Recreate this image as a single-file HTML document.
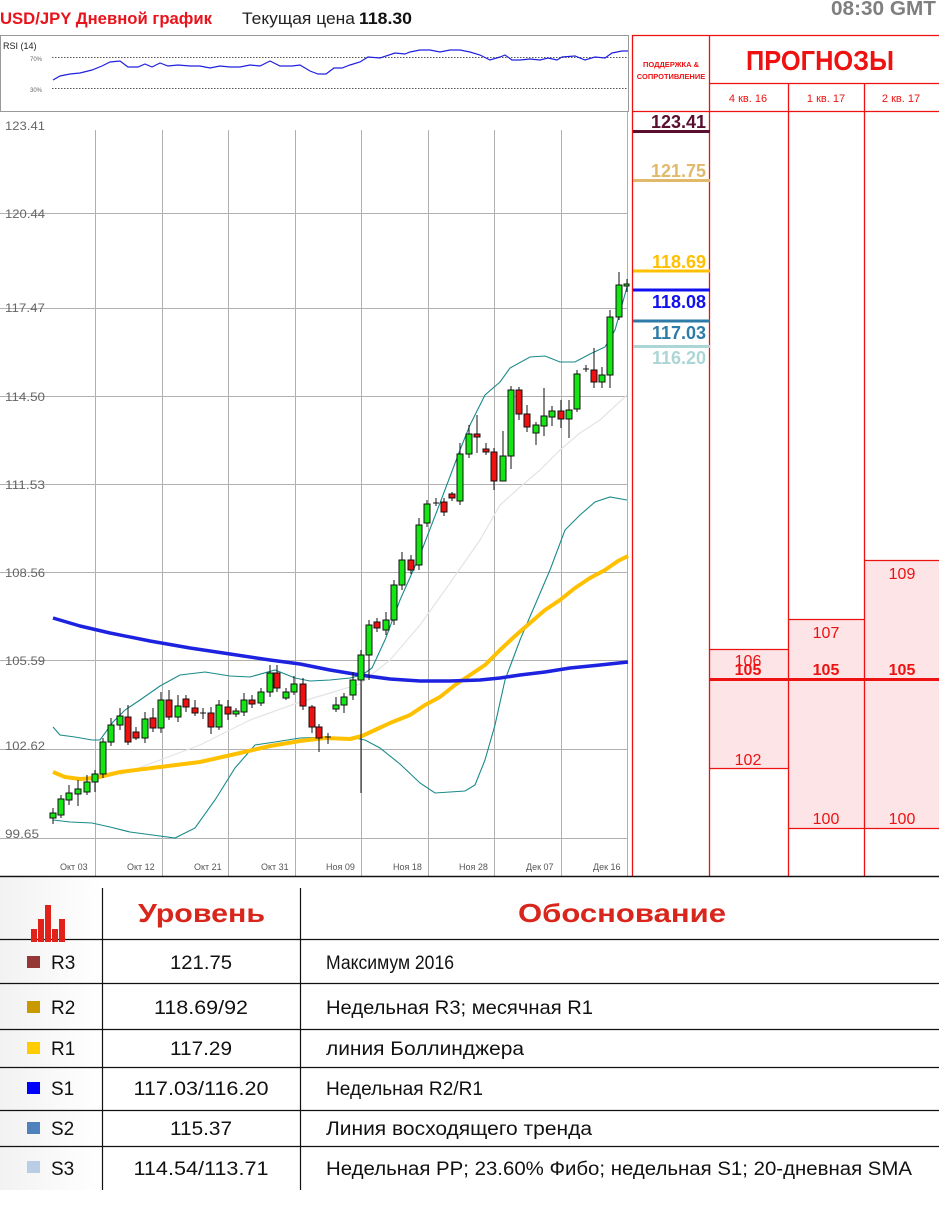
<!DOCTYPE html>
<html><head><meta charset="utf-8"><style>
html,body{margin:0;padding:0;background:#fff;width:939px;height:1209px;overflow:hidden}
svg{display:block}
text{font-family:"Liberation Sans","DejaVu Sans",sans-serif}
</style></head><body>
<svg width="939" height="1209" viewBox="0 0 939 1209" xmlns="http://www.w3.org/2000/svg">
<defs>
<linearGradient id="lg" x1="0" x2="1" y1="0" y2="0"><stop offset="0" stop-color="#f2f2f2"/><stop offset="1" stop-color="#fff"/></linearGradient>
</defs>
<text x="0" y="24" font-size="17" font-weight="bold" fill="#e8141c" textLength="212" lengthAdjust="spacingAndGlyphs">USD/JPY Дневной график</text>
<text x="242" y="24" font-size="17" fill="#222" textLength="113" lengthAdjust="spacingAndGlyphs">Текущая цена</text>
<text x="359" y="24" font-size="17" font-weight="bold" fill="#111" textLength="53" lengthAdjust="spacingAndGlyphs">118.30</text>
<text x="831" y="15" font-size="20" font-weight="bold" fill="#7f7f7f" textLength="105" lengthAdjust="spacingAndGlyphs">08:30 GMT</text>

<rect x="0.5" y="35.5" width="628" height="76" fill="#fff" stroke="#999"/>
<text x="3" y="49" font-size="9" fill="#222">RSI (14)</text>
<text x="30" y="61" font-size="6" fill="#666">70%</text>
<text x="30" y="92" font-size="6" fill="#666">30%</text>
<line x1="52" y1="57.5" x2="628" y2="57.5" stroke="#555" stroke-dasharray="1.5,1.5"/>
<line x1="52" y1="88.5" x2="628" y2="88.5" stroke="#555" stroke-dasharray="1.5,1.5"/>
<polyline fill="none" stroke="#2020e0" stroke-width="1.2" points="53,80 60,76 70,74 80,73 92,70 102,66 110,62 120,61 128,67 138,67 145,64 152,67 160,63 168,66 178,65 190,66 200,66 210,68 220,66 230,67 240,67 250,65 260,66 270,61 280,66 292,66 300,65 310,71 318,74 326,74 334,68 342,68 350,65 360,62 368,57 380,58 395,53 405,54 410,52 420,50 430,50 440,52 450,50 460,50 470,52 480,55 490,60 500,57 505,55 512,60 520,60 530,59 540,60 548,58 557,60 562,57 575,56 585,60 595,57 605,58 612,53 622,51 628,51"/>

<g stroke="#b0b0b0" stroke-width="1">
<line x1="0" y1="213.5" x2="628" y2="213.5"/>
<line x1="0" y1="308.5" x2="628" y2="308.5"/>
<line x1="0" y1="396.5" x2="628" y2="396.5"/>
<line x1="0" y1="484.5" x2="628" y2="484.5"/>
<line x1="0" y1="572.5" x2="628" y2="572.5"/>
<line x1="0" y1="660.5" x2="628" y2="660.5"/>
<line x1="0" y1="749.5" x2="628" y2="749.5"/>
<line x1="0" y1="838.5" x2="628" y2="838.5"/>
<line x1="95.5" y1="130" x2="95.5" y2="876"/>
<line x1="162.5" y1="130" x2="162.5" y2="876"/>
<line x1="228.5" y1="130" x2="228.5" y2="876"/>
<line x1="295.5" y1="130" x2="295.5" y2="876"/>
<line x1="361.5" y1="130" x2="361.5" y2="876"/>
<line x1="428.5" y1="130" x2="428.5" y2="876"/>
<line x1="494.5" y1="130" x2="494.5" y2="876"/>
<line x1="561.5" y1="130" x2="561.5" y2="876"/>
<line x1="627.5" y1="112" x2="627.5" y2="876"/>
</g>
<g font-size="12" fill="#666">
<text x="5" y="130" textLength="40" lengthAdjust="spacingAndGlyphs">123.41</text>
<text x="5" y="218" textLength="40" lengthAdjust="spacingAndGlyphs">120.44</text>
<text x="5" y="312" textLength="40" lengthAdjust="spacingAndGlyphs">117.47</text>
<text x="5" y="401" textLength="40" lengthAdjust="spacingAndGlyphs">114.50</text>
<text x="5" y="489" textLength="40" lengthAdjust="spacingAndGlyphs">111.53</text>
<text x="5" y="577" textLength="40" lengthAdjust="spacingAndGlyphs">108.56</text>
<text x="5" y="665" textLength="40" lengthAdjust="spacingAndGlyphs">105.59</text>
<text x="5" y="750" textLength="40" lengthAdjust="spacingAndGlyphs">102.62</text>
<text x="5" y="838" textLength="34" lengthAdjust="spacingAndGlyphs">99.65</text>
</g>
<g font-size="9" fill="#555">
<text x="60" y="870">Окт 03</text>
<text x="127" y="870">Окт 12</text>
<text x="194" y="870">Окт 21</text>
<text x="261" y="870">Окт 31</text>
<text x="326" y="870">Ноя 09</text>
<text x="393" y="870">Ноя 18</text>
<text x="459" y="870">Ноя 28</text>
<text x="526" y="870">Дек 07</text>
<text x="593" y="870">Дек 16</text>
</g>

<polyline fill="none" stroke="#e4e4e4" stroke-width="1.2" points="120,775 160,760 200,745 250,720 300,702 340,690 360,684 390,660 420,625 450,583 480,540 500,505 520,487 540,470 560,450 580,433 600,420 627,395"/>
<polyline fill="none" stroke="#1a8a8a" stroke-width="1.1" points="53,727 60,735 75,737 92,740 100,740 113,722 125,710 140,700 160,686 180,675 205,672 230,676 250,677 275,670 295,678 310,681 330,680 350,678 362,675 372,668 385,640 400,600 420,555 440,503 460,450 470,425 485,395 500,382 510,368 530,357 545,356 560,362 575,362 590,354 605,347 615,330 627,287"/>
<polyline fill="none" stroke="#1a8a8a" stroke-width="1.1" points="53,820 70,822 92,823 110,827 130,832 160,836 175,838 195,828 215,800 235,768 255,745 275,742 300,738 330,737 355,738 365,740 380,748 400,764 420,783 435,793 450,792 465,791 475,785 485,760 495,725 505,680 520,640 535,605 550,570 565,530 580,515 595,502 610,497 627,500"/>
<polyline fill="none" stroke="#ffc000" stroke-width="4" stroke-linejoin="round" points="53,772 65,777 80,779 95,778 120,772 160,767 200,762 240,753 270,746 300,741 325,738 350,739 362,736 375,730 390,723 410,715 425,705 440,697 455,685 470,675 485,665 500,650 515,636 530,623 545,610 560,600 575,588 590,578 605,570 618,561 628,556"/>
<polyline fill="none" stroke="#1c22e0" stroke-width="3.5" stroke-linejoin="round" points="53,618 80,626 110,633 150,641 190,648 230,654 270,660 300,664 330,670 360,675 390,679 420,681 450,681 480,680 500,678 520,675 545,672 570,668 600,665 628,662"/>

<g stroke="#111" stroke-width="1">
<g fill="#14e614">
<line x1="53" y1="808" x2="53" y2="824"/><rect x="50" y="813" width="6" height="5"/>
<line x1="61" y1="795" x2="61" y2="818"/><rect x="58" y="799" width="6" height="16"/>
<line x1="69" y1="785" x2="69" y2="805"/><rect x="66" y="793" width="6" height="7"/>
<line x1="78" y1="780" x2="78" y2="806"/><rect x="75" y="789" width="6" height="5"/>
<line x1="87" y1="775" x2="87" y2="795"/><rect x="84" y="782" width="6" height="10"/>
<line x1="95" y1="770" x2="95" y2="792"/><rect x="92" y="774" width="6" height="8"/>
<line x1="103" y1="738" x2="103" y2="778"/><rect x="100" y="742" width="6" height="32"/>
<line x1="111" y1="718" x2="111" y2="746"/><rect x="108" y="725" width="6" height="17"/>
<line x1="120" y1="708" x2="120" y2="730"/><rect x="117" y="716" width="6" height="9"/>
<line x1="145" y1="712" x2="145" y2="743"/><rect x="142" y="719" width="6" height="19"/>
<line x1="161" y1="692" x2="161" y2="733"/><rect x="158" y="700" width="6" height="28"/>
<line x1="178" y1="695" x2="178" y2="722"/><rect x="175" y="706" width="6" height="11"/>
<line x1="219" y1="700" x2="219" y2="730"/><rect x="216" y="705" width="6" height="22"/>
<line x1="236" y1="708" x2="236" y2="717"/><rect x="233" y="711" width="6" height="3"/>
<line x1="244" y1="693" x2="244" y2="716"/><rect x="241" y="700" width="6" height="12"/>
<line x1="261" y1="688" x2="261" y2="706"/><rect x="258" y="692" width="6" height="11"/>
<line x1="270" y1="665" x2="270" y2="697"/><rect x="267" y="673" width="6" height="19"/>
<line x1="286" y1="688" x2="286" y2="700"/><rect x="283" y="692" width="6" height="6"/>
<line x1="294" y1="676" x2="294" y2="695"/><rect x="291" y="684" width="6" height="8"/>
<line x1="336" y1="697" x2="336" y2="712"/><rect x="333" y="705" width="6" height="4"/>
<line x1="344" y1="693" x2="344" y2="713"/><rect x="341" y="697" width="6" height="8"/>
<line x1="353" y1="672" x2="353" y2="700"/><rect x="350" y="680" width="6" height="15"/>
<line x1="361" y1="650" x2="361" y2="793"/><rect x="358" y="655" width="6" height="25"/>
<line x1="369" y1="620" x2="369" y2="680"/><rect x="366" y="625" width="6" height="30"/>
<line x1="386" y1="612" x2="386" y2="635"/><rect x="383" y="620" width="6" height="10"/>
<line x1="394" y1="580" x2="394" y2="625"/><rect x="391" y="585" width="6" height="35"/>
<line x1="402" y1="552" x2="402" y2="590"/><rect x="399" y="560" width="6" height="25"/>
<line x1="419" y1="518" x2="419" y2="570"/><rect x="416" y="525" width="6" height="40"/>
<line x1="427" y1="500" x2="427" y2="527"/><rect x="424" y="504" width="6" height="19"/>
<line x1="460" y1="443" x2="460" y2="505"/><rect x="457" y="454" width="6" height="47"/>
<line x1="469" y1="425" x2="469" y2="458"/><rect x="466" y="434" width="6" height="20"/>
<line x1="503" y1="431" x2="503" y2="470"/><rect x="500" y="456" width="6" height="25"/>
<line x1="511" y1="386" x2="511" y2="469"/><rect x="508" y="390" width="6" height="66"/>
<line x1="536" y1="422" x2="536" y2="445"/><rect x="533" y="425" width="6" height="8"/>
<line x1="544" y1="388" x2="544" y2="436"/><rect x="541" y="416" width="6" height="10"/>
<line x1="552" y1="406" x2="552" y2="426"/><rect x="549" y="411" width="6" height="6"/>
<line x1="569" y1="400" x2="569" y2="438"/><rect x="566" y="410" width="6" height="9"/>
<line x1="577" y1="370" x2="577" y2="412"/><rect x="574" y="374" width="6" height="35"/>
<line x1="602" y1="367" x2="602" y2="388"/><rect x="599" y="375" width="6" height="7"/>
<line x1="610" y1="310" x2="610" y2="388"/><rect x="607" y="317" width="6" height="58"/>
<line x1="619" y1="272" x2="619" y2="320"/><rect x="616" y="285" width="6" height="32"/>
<line x1="627" y1="279" x2="627" y2="292"/><rect x="624" y="284" width="5" height="2"/>
</g>
<g fill="#f01010">
<line x1="128" y1="705" x2="128" y2="745"/><rect x="125" y="717" width="6" height="25"/>
<line x1="136" y1="727" x2="136" y2="740"/><rect x="133" y="732" width="6" height="6"/>
<line x1="153" y1="708" x2="153" y2="732"/><rect x="150" y="718" width="6" height="10"/>
<line x1="169" y1="690" x2="169" y2="720"/><rect x="166" y="700" width="6" height="17"/>
<line x1="186" y1="695" x2="186" y2="712"/><rect x="183" y="699" width="6" height="8"/>
<line x1="195" y1="700" x2="195" y2="716"/><rect x="192" y="708" width="6" height="5"/>
<line x1="211" y1="707" x2="211" y2="734"/><rect x="208" y="713" width="6" height="14"/>
<line x1="228" y1="700" x2="228" y2="720"/><rect x="225" y="707" width="6" height="7"/>
<line x1="252" y1="695" x2="252" y2="708"/><rect x="249" y="700" width="6" height="4"/>
<line x1="277" y1="665" x2="277" y2="692"/><rect x="274" y="673" width="6" height="15"/>
<line x1="303" y1="678" x2="303" y2="710"/><rect x="300" y="684" width="6" height="22"/>
<line x1="312" y1="705" x2="312" y2="733"/><rect x="309" y="707" width="6" height="20"/>
<line x1="319" y1="724" x2="319" y2="752"/><rect x="316" y="727" width="6" height="11"/>
<line x1="377" y1="618" x2="377" y2="632"/><rect x="374" y="622" width="6" height="6"/>
<line x1="411" y1="555" x2="411" y2="574"/><rect x="408" y="560" width="6" height="10"/>
<line x1="444" y1="498" x2="444" y2="516"/><rect x="441" y="502" width="6" height="10"/>
<line x1="452" y1="492" x2="452" y2="501"/><rect x="449" y="494" width="6" height="4"/>
<line x1="477" y1="415" x2="477" y2="453"/><rect x="474" y="434" width="6" height="3"/>
<line x1="486" y1="443" x2="486" y2="455"/><rect x="483" y="449" width="6" height="3"/>
<line x1="494" y1="448" x2="494" y2="490"/><rect x="491" y="452" width="6" height="29"/>
<line x1="519" y1="387" x2="519" y2="420"/><rect x="516" y="390" width="6" height="24"/>
<line x1="527" y1="405" x2="527" y2="432"/><rect x="524" y="414" width="6" height="13"/>
<line x1="561" y1="400" x2="561" y2="428"/><rect x="558" y="411" width="6" height="8"/>
<line x1="594" y1="348" x2="594" y2="388"/><rect x="591" y="370" width="6" height="12"/>
</g>
<line x1="200" y1="713" x2="206" y2="713"/><line x1="203" y1="708" x2="203" y2="719"/>
<line x1="325" y1="737" x2="331" y2="737"/><line x1="328" y1="733" x2="328" y2="744"/>
<line x1="433" y1="503" x2="439" y2="503"/><line x1="436" y1="498" x2="436" y2="506"/>
<line x1="583" y1="369" x2="589" y2="369"/><line x1="586" y1="365" x2="586" y2="372"/>
</g>

<rect x="709" y="649" width="79" height="119" fill="#fde4e6"/>
<rect x="788" y="619" width="76" height="209" fill="#fde4e6"/>
<rect x="864" y="560" width="75" height="268" fill="#fde4e6"/>
<g stroke="#ee1111" stroke-width="1.3" fill="none">
<line x1="632.5" y1="35" x2="632.5" y2="876"/>
<line x1="632" y1="35.5" x2="939" y2="35.5"/>
<line x1="632" y1="111.5" x2="939" y2="111.5"/>
<line x1="709" y1="83.5" x2="939" y2="83.5"/>
<line x1="709.5" y1="35" x2="709.5" y2="876"/>
<line x1="788.5" y1="83" x2="788.5" y2="876"/>
<line x1="864.5" y1="83" x2="864.5" y2="876"/>
<line x1="709" y1="649.5" x2="788" y2="649.5"/>
<line x1="709" y1="768.5" x2="788" y2="768.5"/>
<line x1="788" y1="619.5" x2="864" y2="619.5"/>
<line x1="788" y1="828.5" x2="939" y2="828.5"/>
<line x1="864" y1="560.5" x2="939" y2="560.5"/>
</g>
<line x1="709" y1="679.5" x2="939" y2="679.5" stroke="#ee1111" stroke-width="3"/>
<g fill="#ee1111" text-anchor="middle">
<text x="671" y="67" font-size="7.5" font-weight="bold">ПОДДЕРЖКА &amp;</text>
<text x="671" y="79" font-size="7.5" font-weight="bold">СОПРОТИВЛЕНИЕ</text>
<text x="820" y="70" font-size="28" font-weight="bold" textLength="148" lengthAdjust="spacingAndGlyphs">ПРОГНОЗЫ</text>
<text x="748" y="102" font-size="11">4 кв. 16</text>
<text x="826" y="102" font-size="11">1 кв. 17</text>
<text x="901" y="102" font-size="11">2 кв. 17</text>
<text x="748" y="666" font-size="16">106</text>
<text x="748" y="675" font-size="16" font-weight="bold">105</text>
<text x="826" y="675" font-size="16" font-weight="bold">105</text>
<text x="902" y="675" font-size="16" font-weight="bold">105</text>
<text x="748" y="765" font-size="16">102</text>
<text x="826" y="638" font-size="16">107</text>
<text x="902" y="579" font-size="16">109</text>
<text x="826" y="824" font-size="16">100</text>
<text x="902" y="824" font-size="16">100</text>
</g>
<g font-size="18" font-weight="bold" text-anchor="end">
<text x="706" y="128" fill="#5a0f2e">123.41</text>
<text x="706" y="177" fill="#e0b96a">121.75</text>
<text x="706" y="268" fill="#ffc000">118.69</text>
<text x="706" y="308" fill="#1010f0">118.08</text>
<text x="706" y="339" fill="#2e7aa8">117.03</text>
<text x="706" y="364" fill="#acd6d6">116.20</text>
</g>
<g stroke-width="3">
<line x1="633" y1="131.5" x2="710" y2="131.5" stroke="#5a0f2e"/>
<line x1="633" y1="180.5" x2="710" y2="180.5" stroke="#e0b96a"/>
<line x1="633" y1="271" x2="710" y2="271" stroke="#ffc000"/>
<line x1="633" y1="290" x2="710" y2="290" stroke="#1010f0"/>
<line x1="633" y1="321" x2="710" y2="321" stroke="#2e7aa8"/>
<line x1="633" y1="346.5" x2="710" y2="346.5" stroke="#acd6d6"/>
</g>

<rect x="0" y="878" width="102" height="312" fill="url(#lg)"/>
<line x1="0" y1="876.5" x2="939" y2="876.5" stroke="#111" stroke-width="1.5"/>
<g stroke="#111" stroke-width="1.2">
<line x1="102.5" y1="888" x2="102.5" y2="1190"/>
<line x1="300.5" y1="888" x2="300.5" y2="1190"/>
<line x1="0" y1="939.5" x2="939" y2="939.5"/>
<line x1="0" y1="983.5" x2="939" y2="983.5"/>
<line x1="0" y1="1029.5" x2="939" y2="1029.5"/>
<line x1="0" y1="1067.5" x2="939" y2="1067.5"/>
<line x1="0" y1="1110.5" x2="939" y2="1110.5"/>
<line x1="0" y1="1146.5" x2="939" y2="1146.5"/>
</g>
<g fill="#e0221a">
<rect x="31" y="929" width="6" height="13"/>
<rect x="38" y="919" width="6" height="23"/>
<rect x="45" y="905" width="6" height="37"/>
<rect x="52" y="929" width="6" height="13"/>
<rect x="59" y="919" width="6" height="23"/>
</g>
<text x="138" y="922" font-size="26" font-weight="bold" fill="#d9261c" textLength="127" lengthAdjust="spacingAndGlyphs">Уровень</text>
<text x="518" y="922" font-size="26" font-weight="bold" fill="#d9261c" textLength="208" lengthAdjust="spacingAndGlyphs">Обоснование</text>
<rect x="27" y="956" width="13" height="12" fill="#953735"/>
<rect x="27" y="1001" width="13" height="12" fill="#c89a00"/>
<rect x="27" y="1042" width="13" height="12" fill="#ffcc00"/>
<rect x="27" y="1082" width="13" height="12" fill="#0000ff"/>
<rect x="27" y="1122" width="13" height="12" fill="#4f81bd"/>
<rect x="27" y="1161" width="13" height="12" fill="#b9cde5"/>
<g font-size="19" fill="#111">
<text x="51" y="969">R3</text>
<text x="51" y="1014">R2</text>
<text x="51" y="1055">R1</text>
<text x="51" y="1095">S1</text>
<text x="51" y="1135">S2</text>
<text x="51" y="1175">S3</text>
</g>
<g font-size="19" fill="#111" text-anchor="middle">
<text x="201" y="969" textLength="62" lengthAdjust="spacingAndGlyphs">121.75</text>
<text x="201" y="1014" textLength="94" lengthAdjust="spacingAndGlyphs">118.69/92</text>
<text x="201" y="1055" textLength="62" lengthAdjust="spacingAndGlyphs">117.29</text>
<text x="201" y="1095" textLength="135" lengthAdjust="spacingAndGlyphs">117.03/116.20</text>
<text x="201" y="1135" textLength="62" lengthAdjust="spacingAndGlyphs">115.37</text>
<text x="201" y="1175" textLength="135" lengthAdjust="spacingAndGlyphs">114.54/113.71</text>
</g>
<g font-size="19" fill="#111">
<text x="326" y="969" textLength="128" lengthAdjust="spacingAndGlyphs">Максимум 2016</text>
<text x="326" y="1014" textLength="267" lengthAdjust="spacingAndGlyphs">Недельная R3; месячная R1</text>
<text x="326" y="1055" textLength="198" lengthAdjust="spacingAndGlyphs">линия Боллинджера</text>
<text x="326" y="1095" textLength="157" lengthAdjust="spacingAndGlyphs">Недельная R2/R1</text>
<text x="326" y="1135" textLength="266" lengthAdjust="spacingAndGlyphs">Линия восходящего тренда</text>
<text x="326" y="1175" textLength="586" lengthAdjust="spacingAndGlyphs">Недельная PP; 23.60% Фибо; недельная S1; 20-дневная SMA</text>
</g>
</svg>
</body></html>
